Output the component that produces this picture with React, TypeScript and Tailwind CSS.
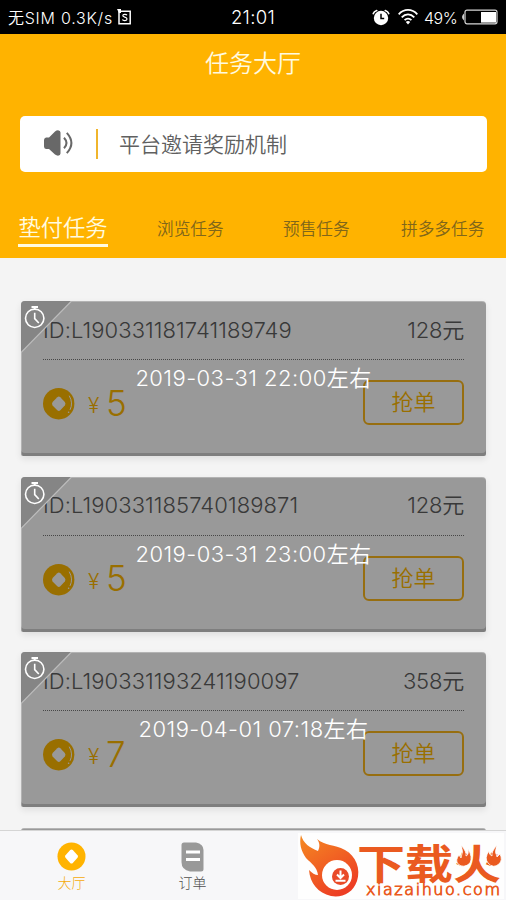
import React from 'react';

interface Task {
  id: string;
  amount: string;
  reward: string;
  time: string;
}

const tasks: Task[] = [
  { id: 'L190331181741189749', amount: '128', reward: '5', time: '2019-03-31 22:00' },
  { id: 'L190331185740189871', amount: '128', reward: '5', time: '2019-03-31 23:00' },
  { id: 'L190331193241190097', amount: '358', reward: '7', time: '2019-04-01 07:18' },
];

const StatusBar: React.FC = () => (
  <div className="relative h-[34px] shrink-0 bg-black text-white flex items-center justify-between pl-2 pr-2 text-[16px] leading-none">
    <div className="flex items-center">
      <span className="w-[109px] pt-px whitespace-nowrap font-[350] tracking-[0.75px]">无SIM 0.3K/s</span>
      <svg width="15" height="16" viewBox="0 0 15 16" fill="none" className="mt-[-1px]">
        <path d="M2 2.2H13.2V14.8H2Z" stroke="white" strokeWidth="1.5" />
        <path d="M0 0H4V4H2Z" fill="white" />
        <path d="M10 6.2C9.3 4.9 5.8 4.9 5.8 6.8C5.8 8.5 10 7.8 10 9.9C10 12 6.1 12 5.4 10.5" stroke="white" strokeWidth="1.2" />
      </svg>
    </div>
    <div className="absolute inset-0 flex items-center justify-center text-[18.5px] pt-px font-[350] tracking-[0.3px]">21:01</div>
    <div className="flex items-center">
      <svg width="18" height="17" viewBox="0 0 18 17" fill="none">
        <circle cx="9" cy="9" r="7.2" fill="white" />
        <path d="M1.3 4.6Q2 2.4 4.7 1.5M16.7 4.6Q16 2.4 13.3 1.5" stroke="white" strokeWidth="1.7" strokeLinecap="round" />
        <path d="M9 4.8V9.4H12.2" stroke="black" strokeWidth="1.5" />
      </svg>
      <svg width="20" height="16" viewBox="0 0 20 16" fill="none" className="ml-[8px]">
        <path d="M0.7 5.3C6 -0.5 14 -0.5 19.3 5.3M3.7 8.3C7.4 4.3 12.6 4.3 16.3 8.3M6.6 11.2C8.7 9 11.3 9 13.4 11.2" stroke="white" strokeWidth="1.8" />
        <path d="M7.8 12.9Q10 11.3 12.2 12.9L10 15.4Z" fill="white" />
      </svg>
      <span className="ml-[6px] w-[37px] pt-px whitespace-nowrap font-[350] tracking-[-0.5px]">49%</span>
      <svg width="37" height="16" viewBox="0 0 37 16" fill="none">
        <path d="M2.8 4.5Q-0.4 8 2.8 11.5Z" fill="white" />
        <rect x="4" y="1.2" width="32" height="13.6" rx="2" stroke="#d8d8d8" strokeWidth="1.2" />
        <rect x="20" y="3" width="15" height="10.6" fill="white" />
      </svg>
    </div>
  </div>
);

const SpeakerIcon: React.FC = () => (
  <svg width="30" height="26" viewBox="0 0 30 26" fill="none" className="-mt-[2px]">
    <path d="M3 7.5H6L12 1.4Q13.5 0.3 15 0.3Q17.5 0.5 17.5 2.5V23.5Q17.5 25.6 15 25.7Q13.5 25.7 12 24.6L6 19H3Q1 18.5 1 16.5V10Q1 8 3 7.5Z" fill="#686868" />
    <path d="M21 7.7Q26 13 21 18.3" stroke="#686868" strokeWidth="2" />
    <path d="M23.8 2.8Q33 13 23.8 23.2" stroke="#686868" strokeWidth="2" />
  </svg>
);

const CoinIcon: React.FC = () => (
  <svg width="32" height="32" viewBox="0 0 32 32" fill="none">
    <circle cx="15.7" cy="15.7" r="15.7" fill="#ffb900" />
    <path d="M14.3 9.2Q15.8 7.8 17.3 9.2L21.8 14Q23.2 15.8 21.8 17.6L17.3 22.3Q15.8 23.7 14.3 22.3L9.6 17.6Q8.4 15.8 9.6 14Z" fill="white" />
    <path d="M26.4 8Q30.4 15 27.2 21.5" stroke="white" strokeWidth="1" strokeLinecap="round" />
    <circle cx="25.6" cy="24.3" r="0.8" fill="white" />
  </svg>
);

const TimerCorner: React.FC = () => (
  <svg width="52" height="52" viewBox="0 0 52 52" fill="none" className="absolute left-0 top-0">
    <path d="M0 4Q0 0 4 0H50.5L0 51.5Z" fill="#858585" />
    <path d="M50.5 0L0 51.5" stroke="#bdbdbd" strokeWidth="1.2" />
    <circle cx="13.7" cy="17.3" r="9.2" stroke="white" strokeWidth="1.6" />
    <path d="M10.5 6H17M13.7 6V8.2" stroke="white" strokeWidth="1.8" />
    <path d="M13.7 11.8V17.6L17.8 22" stroke="white" strokeWidth="1.6" />
  </svg>
);

const TaskCard: React.FC<{ task: Task }> = ({ task }) => (
  <div className="relative h-[155px] shrink-0 rounded-t-[4px] rounded-b-[2px] bg-[#d2d2d2] shadow-[0_3px_7px_rgba(0,0,0,0.09)]">
    <div className="h-[152px] rounded-[4px] bg-white px-[22px]">
      <div className="h-[59px] flex items-center justify-between border-b-[1.5px] border-dotted border-[#777777] text-[22px] text-[#606060] font-light">
        <span className="tracking-[0.08px] whitespace-nowrap">ID:{task.id}</span>
        <span className="tracking-[-0.2px] font-[350]">{task.amount}元</span>
      </div>
      <div className="h-[88px] flex items-center text-[#ffb900]">
        <CoinIcon />
        <span className="ml-[13px] mt-[4px] w-[16px] text-[21px] font-[350]">¥</span>
        <span className="ml-[2px] -mt-[2px] text-[35px] font-light">{task.reward}</span>
        <button className="ml-auto w-[101px] h-[45px] -mt-[3px] rounded-[6px] border-2 border-[#fcb81c] text-[22px] font-[350]">抢单</button>
      </div>
    </div>
    {/* Not yet open: dim the card and show the start time */}
    <div className="absolute inset-0 bg-black/40 border-t border-l border-white/25 rounded-t-[4px] rounded-b-[2px]" />
    <TimerCorner />
    <div className="absolute inset-x-0 top-[61px] text-center text-[22px] leading-[32px] text-white font-[350] tracking-[0.45px]">
      {task.time}左右
    </div>
  </div>
);

const Watermark: React.FC = () => (
  <div className="absolute left-[298px] top-[2px] w-[206px] h-[66px] bg-[#fefefe]">
    <svg width="206" height="66" viewBox="0 0 206 66" fill="none">
      <defs>
        <linearGradient id="flame" x1="0" y1="0" x2="0.6" y2="1">
          <stop offset="0" stopColor="#f58a22" />
          <stop offset="1" stopColor="#ed3e24" />
        </linearGradient>
      </defs>
      <path d="M3 2C5 10 12 15 20 18C22 14 22 10 19 6C27 13 36 11 47 17C58 23 63 36 59 48C55 60 44 65 33 63C20 60 12 50 11 37C14 40 17 42 20 42C19 34 14 31 8 25C3 18 1 10 3 2Z" fill="url(#flame)" />
      <circle cx="39" cy="42" r="15" fill="white" />
      <circle cx="42.5" cy="43.5" r="8.5" fill="#e94a28" />
      <path d="M42.5 37.5V44M39 41.5L42.5 45L46 41.5M37.5 47.8H47.5" stroke="white" strokeWidth="2" />
      <text x="59" y="45.5" textLength="144" lengthAdjust="spacingAndGlyphs" fontSize="41" fontWeight="700" fill="#ea5a20" className="font-['Noto_Sans_CJK_SC',sans-serif]">下载火</text>
      {/* Small flames on both sides of the last character */}
      <path d="M163 12Q169 19 168 23Q171 22 170 16Q175 24 172 30Q166 36 160 31Q157 27 161 22L163 25Q166 19 163 12ZM199 12Q193 19 194 23Q191 22 191 18Q186 25 190 30Q195 36 201 31Q205 27 202 21L199 24Q196 19 199 12Z" fill="#ea5a20" stroke="#fefefe" strokeWidth="0.8" />
      <text x="68" y="62" textLength="134" fontSize="16" stroke="#ea5a20" strokeWidth="0.9" fill="#ea5a20" className="font-['DejaVu_Sans',sans-serif]">xiazaihuo.com</text>
    </svg>
  </div>
);

const BottomNav: React.FC = () => (
  <div className="relative h-[70px] shrink-0 bg-[#f7f7f9] border-t border-[#d5d5d5] flex pl-[11px] text-[14px] font-light">
    <div className="w-[121px] flex flex-col items-center pt-[11px] text-[#f5ab0a]">
      <svg width="29" height="29" viewBox="0 0 29 29" fill="none">
        <circle cx="14.5" cy="14.5" r="14" fill="#ffb300" />
        <path d="M13.2 8Q14.5 7 15.8 8L20.5 13.2Q21.5 14.5 20.5 15.8L15.8 21Q14.5 22 13.2 21L8.5 15.8Q7.5 14.5 8.5 13.2Z" fill="white" />
      </svg>
      <span className="mt-[2px] leading-5">大厅</span>
    </div>
    <div className="w-[121px] flex flex-col items-center pt-[11px] text-[#505050]">
      <svg width="23" height="30" viewBox="0 0 23 30" fill="none">
        <path d="M3 0.5H15Q22.5 2 22.5 8V27Q22.5 29.5 20 29.5H9Q0.5 28 0.5 20V3Q0.5 0.5 3 0.5Z" fill="#999999" />
        <path d="M5 10H19M5 17.5H19" stroke="white" strokeWidth="3" />
      </svg>
      <span className="mt-px leading-5">订单</span>
    </div>
    <Watermark />
  </div>
);

const App: React.FC = () => {
  return (
    <div className="w-[506px] h-[900px] flex flex-col overflow-hidden bg-[#f4f4f4] font-['Inter','Noto_Sans_CJK_SC',sans-serif]">
      <StatusBar />

      {/* Header */}
      <div className="h-[224px] shrink-0 bg-[#ffb300] px-5 pt-[12px] flex flex-col">
        <h1 className="h-9 leading-9 text-center text-[24px] font-[350] text-[#fffbe0]">任务大厅</h1>
        <div className="mt-[34px] h-14 w-[467px] shrink-0 rounded-[5px] bg-white flex items-center pl-[23px]">
          <SpeakerIcon />
          <div className="ml-[23px] w-[2px] h-[30px] bg-[#f0b52c]" />
          <span className="ml-[21px] mt-[2px] text-[21px] font-[350] text-[#606060]">平台邀请奖励机制</span>
        </div>
        <div className="-mx-[2px] mt-[38px] flex items-start text-[16.7px] font-[350] text-[#80661a] whitespace-nowrap">
          <div className="w-[90px] h-[37px] border-b-[3px] border-[#fffbe0] text-center text-[22.3px] leading-[36px] text-[#fffbe0]">
            垫付任务
          </div>
          <span className="ml-[49px] w-[67px] leading-[39px]">浏览任务</span>
          <span className="ml-[59px] w-[67px] leading-[39px]">预售任务</span>
          <span className="ml-[51px] leading-[39px]">拼多多任务</span>
        </div>
      </div>

      {/* Task list */}
      <div className="flex-1 min-h-0 overflow-hidden pt-[43px] pl-[21px] pr-5 flex flex-col gap-[20.5px]">
        {tasks.map((task) => (
          <TaskCard key={task.id} task={task} />
        ))}
        {/* Top edge of the next card */}
        <div className="h-[3px] shrink-0 rounded-t-[3px] bg-[#999999] border-t border-[#b5b5b5]" />
      </div>

      <BottomNav />
    </div>
  );
};

export default App;
